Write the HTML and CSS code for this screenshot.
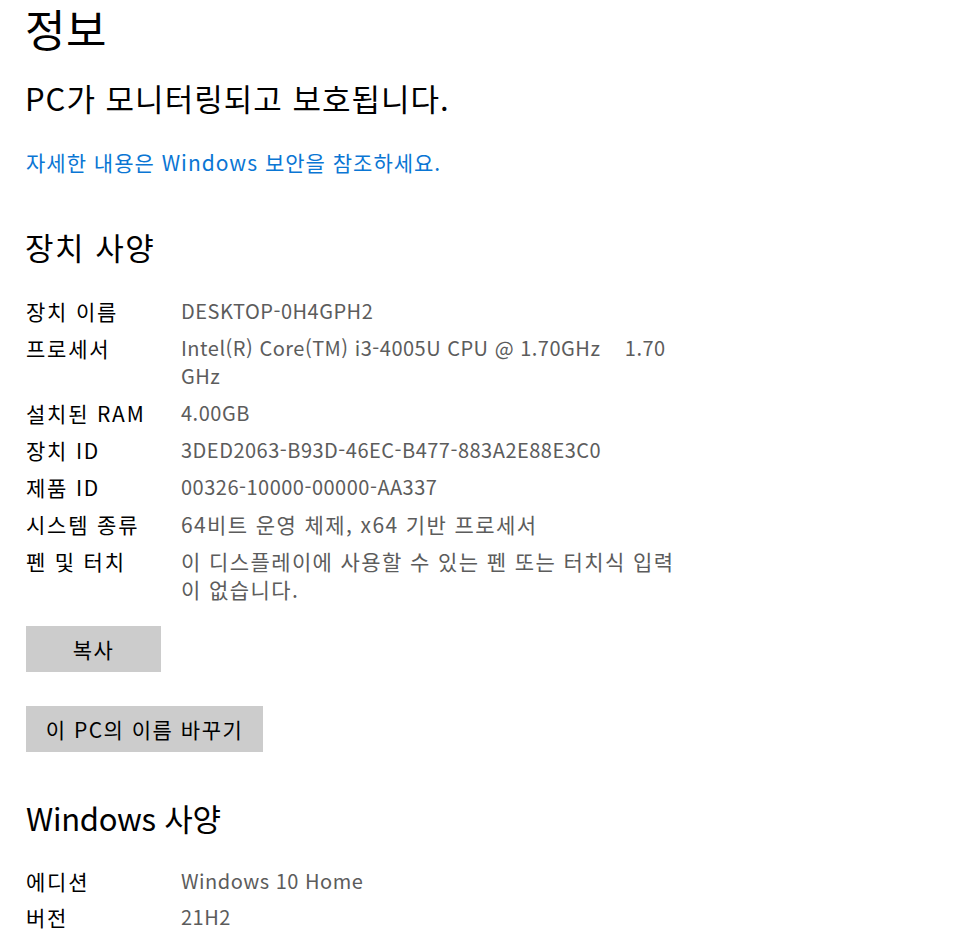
FILE: index.html
```html
<!DOCTYPE html>
<html lang="ko">
<head>
<meta charset="utf-8">
<title>정보</title>
<link rel="stylesheet" href="styles.css">
</head>
<body>
<main class="page">
  <h1 class="title">정보</h1>
  <p class="status">PC가 모니터링되고 보호됩니다.</p>
  <a class="link" href="#">자세한 내용은 Windows 보안을 참조하세요.</a>

  <h2 class="section">장치 사양</h2>
  <dl class="specs">
    <dt>장치 이름</dt><dd class="latin">DESKTOP-0H4GPH2</dd>
    <dt>프로세서</dt><dd class="latin">Intel(R) Core(TM) i3-4005U CPU @ 1.70GHz&nbsp;&nbsp;&nbsp; 1.70 GHz</dd>
    <dt>설치된 RAM</dt><dd class="latin">4.00GB</dd>
    <dt>장치 ID</dt><dd class="latin">3DED2063-B93D-46EC-B477-883A2E88E3C0</dd>
    <dt>제품 ID</dt><dd class="latin">00326-10000-00000-AA337</dd>
    <dt>시스템 종류</dt><dd class="ko">64비트 운영 체제, x64 기반 프로세서</dd>
    <dt>펜 및 터치</dt><dd class="ko">이 디스플레이에 사용할 수 있는 펜 또는 터치식 입력이 없습니다.</dd>
  </dl>
  <div class="buttons">
    <button class="btn btn-copy">복사</button>
    <button class="btn btn-rename">이 PC의 이름 바꾸기</button>
  </div>

  <h2 class="section section-win">Windows 사양</h2>
  <dl class="specs specs-win">
    <dt>에디션</dt><dd class="latin">Windows 10 Home</dd>
    <dt>버전</dt><dd class="latin">21H2</dd>
  </dl>
</main>
</body>
</html>
```
FILE: styles.css
```css
html, body {
  margin: 0;
  padding: 0;
  background: #ffffff;
}
body {
  font-family: "Noto Sans CJK KR", "Noto Sans", sans-serif;
  color: #000000;
}
.page {
  padding-left: 25px;
  display: flex;
  flex-direction: column;
  align-items: flex-start;
}
.title {
  margin: 0;
  font-size: 44px;
  font-weight: 400;
  line-height: 56px;
  letter-spacing: 0.5px;
}
.status {
  margin: 22px 0 0;
  font-size: 31px;
  line-height: 40px;
  font-weight: 400;
  letter-spacing: 1px;
}
.link {
  margin-top: 30px;
  font-size: 21px;
  line-height: 28px;
  color: #0a76d4;
  text-decoration: none;
  letter-spacing: 1px;
  padding-left: 1px;
}
.section {
  margin: 51px 0 0;
  font-size: 31px;
  line-height: 40px;
  font-weight: 400;
  letter-spacing: 1.5px;
}
.section-win {
  margin-top: 46px;
  padding-left: 1px;
  letter-spacing: -0.3px;
}
.specs {
  margin: 30px 0 0;
  display: grid;
  grid-template-columns: 155px 505px;
  row-gap: 9px;
  line-height: 28px;
  padding-left: 1px;
}
.specs-win {
  margin-top: 29px;
  row-gap: 8px;
}
.specs dt {
  color: #000000;
  font-size: 21px;
  letter-spacing: 1.8px;
}
.specs dd {
  margin: 0;
  color: #5c5c5c;
}
.specs dd.latin {
  font-size: 20px;
  letter-spacing: 0.5px;
}
.specs dd.ko {
  font-size: 21px;
  letter-spacing: 1.4px;
}
.buttons {
  margin-top: 23px;
  display: flex;
  flex-direction: column;
  align-items: flex-start;
  gap: 34px;
  padding-left: 1px;
}
.btn {
  height: 46px;
  border: none;
  background: #cccccc;
  font-family: inherit;
  font-size: 21px;
  letter-spacing: 1.5px;
  color: #000000;
  padding: 0;
  cursor: pointer;
}
.btn-copy {
  width: 135px;
}
.btn-rename {
  width: 237px;
}
```
